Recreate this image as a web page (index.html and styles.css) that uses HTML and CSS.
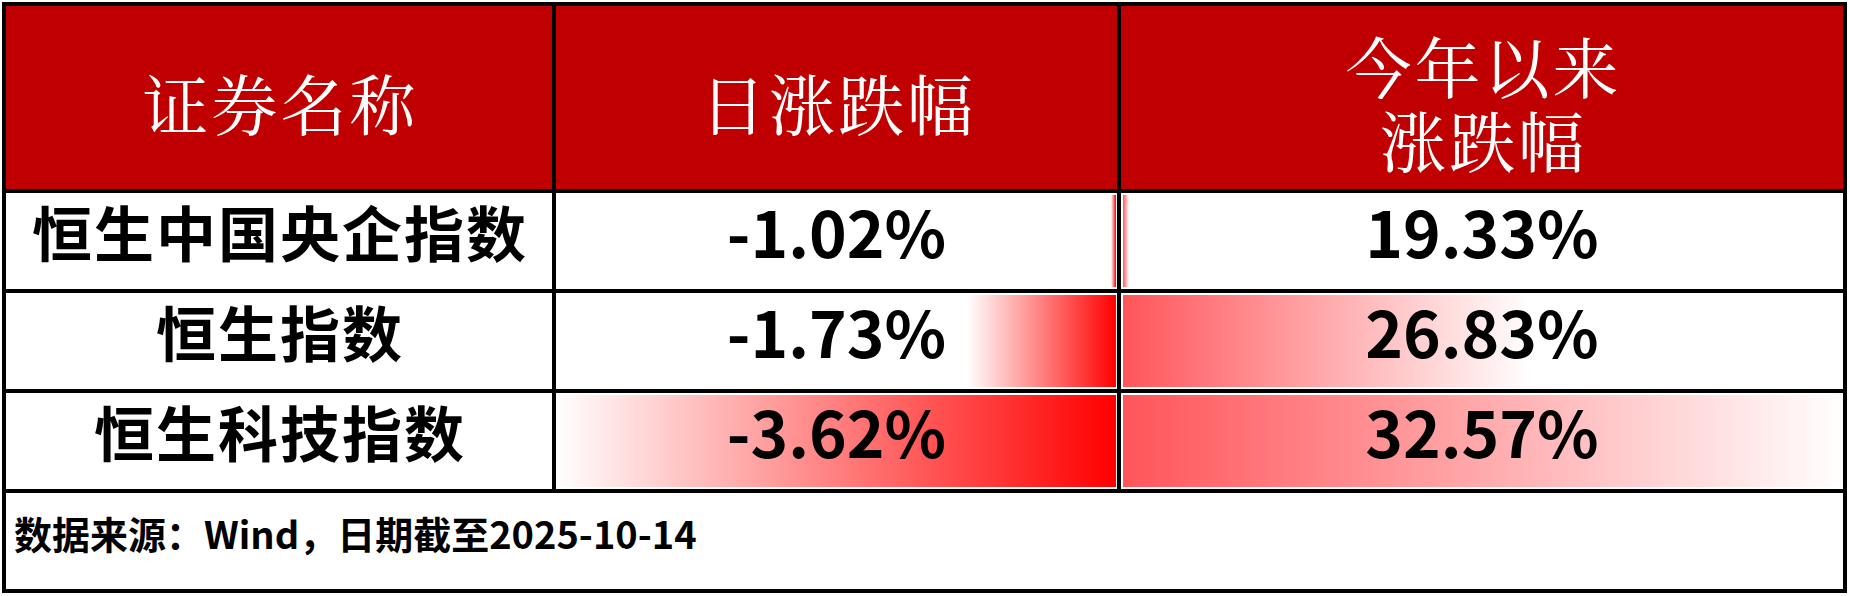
FILE: index.html
```html
<!DOCTYPE html>
<html lang="zh-CN">
  <head>
    <meta charset="UTF-8" />
    <title>港股指数涨跌幅</title>
    <link rel="stylesheet" href="styles.css">
  </head>
  <body>
    <div class="sheet">
      <div class="cell head">证券名称</div>
      <div class="cell head">日涨跌幅</div>
      <div class="cell head">
        <span class="line">今年以来</span>
        <span class="line">涨跌幅</span>
      </div>

      <div class="cell name">恒生中国央企指数</div>
      <div class="cell num bar-down" style="--bar: 5px">-1.02%</div>
      <div class="cell num bar-up" style="--bar: 6px">19.33%</div>

      <div class="cell name">恒生指数</div>
      <div class="cell num bar-down" style="--bar: 26.6%">-1.73%</div>
      <div class="cell num bar-up" style="--bar: 56.6%">26.83%</div>

      <div class="cell name">恒生科技指数</div>
      <div class="cell num bar-down" style="--bar: 100%">-3.62%</div>
      <div class="cell num bar-up" style="--bar: 100%">32.57%</div>

      <div class="cell foot">数据来源：Wind，日期截至2025-10-14</div>
    </div>
  </body>
</html>
```

FILE: styles.css
```css
body {
  margin: 0;
  background-color: #fff;
  font-family: "Noto Sans CJK SC", "Noto Sans", sans-serif;
}
.sheet {
  display: grid;
  grid-template-columns: 546px 561px 722px;
  grid-template-rows: 183px 96px 96px 96px 96px;
  gap: 4px;
  padding: 4px;
  margin: 2px 0 0 2px;
  width: max-content;
  background-color: #000;
}
.cell {
  display: flex;
  align-items: center;
  justify-content: center;
  background-color: #fff;
  text-align: center;
}
.head {
  flex-direction: column;
  background-color: #c00000;
  color: #fff;
  font-family: "Noto Serif CJK SC", "AR PL UMing CN", "Noto Sans CJK SC", serif;
  font-size: 66px;
  font-weight: normal;
  line-height: 74px;
  letter-spacing: 3px;
  padding: 8px 0 0 3px;
}
.head .line {
  display: block;
}
.name {
  font-size: 60px;
  font-weight: bold;
  letter-spacing: 2px;
  padding: 0 0 22px 2px;
}
.num {
  font-size: 64px;
  font-weight: bold;
  padding: 0 0 22px;
}
.bar-down,
.bar-up {
  background-repeat: no-repeat;
  background-size: var(--bar) calc(100% - 4px);
}
.bar-down {
  background-image: linear-gradient(to right, #fff, #f00);
  background-position: right 1px center;
}
.bar-up {
  background-image: linear-gradient(to right, #ff555a, #fff);
  background-position: left 2px center;
}
.foot {
  grid-column: 1 / 4;
  justify-content: flex-start;
  font-size: 38px;
  font-weight: bold;
  padding: 0 0 18px 8px;
}
```
